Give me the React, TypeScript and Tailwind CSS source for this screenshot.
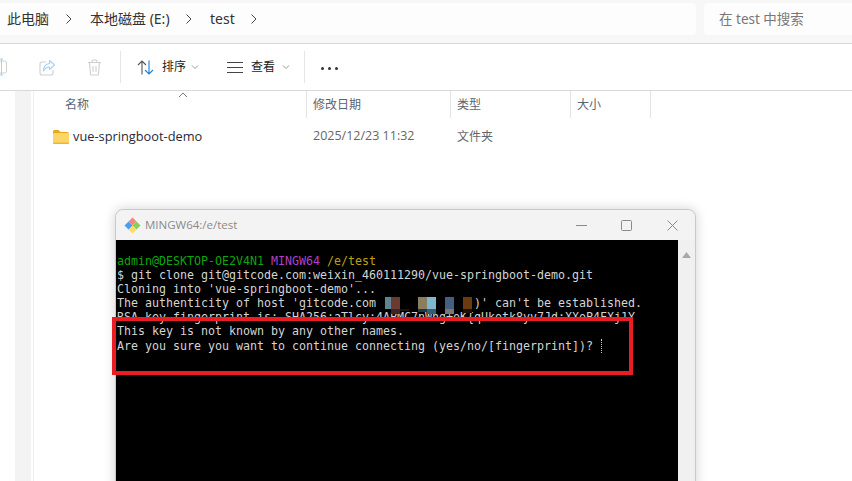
import React from "react";

const ui = { fontFamily: '"Open Sans","Noto Sans CJK SC",sans-serif' };
const cjk = { fontFamily: '"Noto Sans","Noto Sans CJK SC",sans-serif' };
const mono = { fontFamily: '"DejaVu Sans Mono","Liberation Mono",monospace' };

function Chev() {
  return (
    <svg width="8" height="12" viewBox="0 0 8 12" fill="none" stroke="#444" strokeWidth="1">
      <path d="M1.5 1.5 6 6 1.5 10.5" />
    </svg>
  );
}
function Down() {
  return (
    <svg width="8" height="6" viewBox="0 0 8 6" fill="none" stroke="#9a9a9a" strokeWidth="1">
      <path d="M1 1.5 4 4.5 7 1.5" />
    </svg>
  );
}
function Crumb({ children, w }: { children: React.ReactNode; w: string }) {
  return <span className={`text-[14px] leading-none text-[#333] whitespace-nowrap ${w}`}>{children}</span>;
}

function Mosaic() {
  const blocks = [
    { l: 269, t: 57, w: 6, h: 12, c: "#5f8492" },
    { l: 275, t: 57, w: 9, h: 12, c: "#6b3a32" },
    { l: 275, t: 69, w: 9, h: 5, c: "#3a2622" },
    { l: 284, t: 69, w: 9, h: 2, c: "#1d1410" },
    { l: 302, t: 57, w: 9, h: 12, c: "#8a7d60" },
    { l: 311, t: 57, w: 9, h: 12, c: "#7fb8cc" },
    { l: 302, t: 69, w: 9, h: 3, c: "#1c3a40" },
    { l: 311, t: 69, w: 9, h: 5, c: "#33606c" },
    { l: 329, t: 57, w: 9, h: 12, c: "#45607f" },
    { l: 329, t: 69, w: 9, h: 5, c: "#787878" },
    { l: 347, t: 57, w: 9, h: 12, c: "#6b3a10" },
    { l: 347, t: 69, w: 9, h: 4, c: "#20100a" },
  ];
  return (
    <>
      {blocks.map((b, i) => (
        <div key={i} className="absolute" style={{ left: b.l, top: b.t, width: b.w, height: b.h, background: b.c }} />
      ))}
    </>
  );
}

export default function App() {
  return (
    <div className="relative w-[852px] h-[481px] overflow-hidden bg-white flex flex-col" style={ui}>
      {/* address bar */}
      <div className="h-[44px] shrink-0 bg-[#f7f7f7] border-b border-[#d9d9d9] pt-[3px] flex items-start">
        <div className="w-[696px] h-[32px] bg-[#fdfdfd] rounded-r-[4px] flex items-center pl-[7px]" style={cjk}>
          <Crumb w="w-[58px]">此电脑</Crumb>
          <Chev />
          <span className="w-[17px]" />
          <Crumb w="w-[95px]">本地磁盘 (E:)</Crumb>
          <Chev />
          <span className="w-[17px]" />
          <Crumb w="w-[40px]">test</Crumb>
          <Chev />
        </div>
        <div className="ml-[8px] flex-1 h-[32px] bg-[#fdfdfd] rounded-l-[4px] flex items-center pl-[15px] text-[13.5px] text-[#777]" style={cjk}>
          在 test 中搜索
        </div>
      </div>

      {/* toolbar */}
      <div className="h-[47px] shrink-0 bg-white border-b border-[#d9d9d9] flex items-center">
        <svg className="ml-0 shrink-0" width="8" height="18" viewBox="0 0 8 18" fill="none">
          <path d="M0 3h4.5a2 2 0 0 1 2 2v8a2 2 0 0 1-2 2H0" stroke="#cfcfcf" strokeWidth="1" />
          <path d="M1.5 1v16M0 1h3M0 17h3" stroke="#a5d0f2" strokeWidth="1" />
        </svg>
        <svg className="ml-[31px] shrink-0" width="17" height="17" viewBox="0 0 17 17" fill="none">
          <path d="M7 3H3a2 2 0 0 0-2 2v9a2 2 0 0 0 2 2h9a2 2 0 0 0 2-2v-3" stroke="#cfcfcf" strokeWidth="1.1" />
          <path d="M10.5 1.5 15.5 6l-5 4.5V8C8 8 6 9 4.5 12c0-4 2-7 6-7.5Z" stroke="#a5d0f2" strokeWidth="1.1" strokeLinejoin="round" />
        </svg>
        <svg className="ml-[31px] shrink-0" width="15" height="17" viewBox="0 0 15 17" fill="none" stroke="#cfcfcf" strokeWidth="1.1">
          <path d="M1 3.5h13M5 3.5V2a1 1 0 0 1 1-1h3a1 1 0 0 1 1 1v1.5M2.5 3.5l1 11.5a1 1 0 0 0 1 1h6a1 1 0 0 0 1-1l1-11.5M6 7v6M9 7v6" />
        </svg>
        <div className="ml-[18px] w-px h-[32px] bg-[#e6e6e6] shrink-0" />
        <svg className="ml-[16px] shrink-0" width="17" height="15" viewBox="0 0 17 15" fill="none" strokeWidth="1.1">
          <path d="M5 14.5V1M1 5l4-4 4 4" stroke="#555" />
          <path d="M12 .5V14M8 10l4 4 4-4" stroke="#1a80d8" />
        </svg>
        <span className="ml-[8px] text-[12px] text-[#222] leading-none w-[29px] shrink-0" style={cjk}>排序</span>
        <Down />
        <svg className="ml-[28px] shrink-0" width="16" height="11" viewBox="0 0 16 11" stroke="#444" strokeWidth="1">
          <path d="M0 .5h16M0 5.5h16M0 10.5h16" />
        </svg>
        <span className="ml-[8px] text-[12px] text-[#222] leading-none w-[31px] shrink-0" style={cjk}>查看</span>
        <Down />
        <div className="ml-[14px] w-px h-[32px] bg-[#e6e6e6] shrink-0" />
        <div className="ml-[16px] flex gap-[4px] shrink-0 pt-[2px]">
          <span className="w-[3px] h-[3px] rounded-full bg-[#333]" />
          <span className="w-[3px] h-[3px] rounded-full bg-[#333]" />
          <span className="w-[3px] h-[3px] rounded-full bg-[#333]" />
        </div>
      </div>

      {/* file list */}
      <div className="flex-1 flex min-h-0">
        <div className="w-[15px] shrink-0" />
        <div className="w-[16px] shrink-0 bg-[#f3f3f3]" />
        <div className="w-[2px] shrink-0" />
        <div className="flex-1 border-l border-[#eeeeee] min-w-0">
          <div className="relative flex h-[27px] text-[12px] text-[#5b6570]" style={cjk}>
            <div className="w-[272px] pl-[31px] flex items-center pt-[1px]">名称</div>
            <div className="w-[144px] pl-[6px] flex items-center border-l border-[#e3e3e3]">修改日期</div>
            <div className="w-[120px] pl-[6px] flex items-center border-l border-[#e3e3e3]">类型</div>
            <div className="w-[80px] pl-[6px] flex items-center border-l border-[#e3e3e3]">大小</div>
            <div className="w-px border-l border-[#e3e3e3]" />
            <svg className="absolute left-[144px] top-[1px]" width="10" height="6" viewBox="0 0 10 6" fill="none" stroke="#777" strokeWidth="1">
              <path d="M1 5 5 1l4 4" />
            </svg>
          </div>
          <div className="flex items-center h-[37px] text-[12.8px]">
            <div className="w-[272px] flex items-center pl-[19px]">
              <svg className="shrink-0" width="16" height="14" viewBox="0 0 16 14">
                <path d="M0 1.5A1.5 1.5 0 0 1 1.5 0h4L7.5 2H14a2 2 0 0 1 2 2v1H0Z" fill="#eaa71c" />
                <rect x="0" y="3" width="16" height="11" rx="1.2" fill="#fbd667" />
                <rect x="0" y="12.5" width="16" height="1.5" rx=".7" fill="#efb432" />
              </svg>
              <span className="ml-[4px] text-[#1f2a38] whitespace-nowrap">vue-springboot-demo</span>
            </div>
            <div className="w-[144px] pl-[7px] text-[#666] text-[12.5px] whitespace-nowrap">2025/12/23 11:32</div>
            <div className="pl-[7px] text-[#666] text-[12px]" style={cjk}>文件夹</div>
          </div>
        </div>
      </div>

      {/* terminal window */}
      <div className="absolute left-[115px] top-[209px] w-[581px] h-[290px] bg-[#f0f0f0] border border-[#c9c9c9] rounded-t-[8px] flex flex-col shadow-[0_0_12px_rgba(0,0,0,0.18)]">
        <div className="h-[30px] shrink-0 bg-[#f3f3f3] rounded-t-[8px] flex items-center">
          <svg className="ml-[8px] shrink-0" width="17" height="17" viewBox="0 0 17 17">
            <path d="M8.5 .5 12.5 4.5 8.5 8.5 4.5 4.5Z" fill="#ee8a80" />
            <path d="M12.5 4.5 16.5 8.5 12.5 12.5 8.5 8.5Z" fill="#84d05a" />
            <path d="M8.5 8.5 12.5 12.5 8.5 16.5 4.5 12.5Z" fill="#f9dc6a" />
            <path d="M4.5 4.5 8.5 8.5 4.5 12.5 .5 8.5Z" fill="#4f9df2" />
          </svg>
          <span className="ml-[4px] text-[11.5px] text-[#8a8a8a] whitespace-nowrap" style={{ fontFamily: '"Open Sans",sans-serif' }}>MINGW64:/e/test</span>
          <svg className="ml-auto shrink-0" width="11" height="1" viewBox="0 0 11 1"><path d="M0 .5h11" stroke="#8a8a8a" /></svg>
          <svg className="ml-[34px] shrink-0" width="11" height="11" viewBox="0 0 11 11" fill="none"><rect x=".5" y=".5" width="10" height="10" rx="1" stroke="#8a8a8a" /></svg>
          <svg className="ml-[35px] mr-[17px] shrink-0" width="11" height="11" viewBox="0 0 11 11" fill="none"><path d="M.5.5l10 10M10.5.5l-10 10" stroke="#8a8a8a" /></svg>
        </div>
        <div className="flex flex-1 min-h-0">
          <div className="relative w-[562px] bg-black pl-[1px] pt-[13.6px] text-[11.63px] leading-[14.17px] text-[#d4d4d4] whitespace-pre overflow-hidden" style={mono}>
            <div>
              <span className="text-[#0aa80a]">admin@DESKTOP-OE2V4N1</span> <span className="text-[#b040c8]">MINGW64</span> <span className="text-[#bfa010]">/e/test</span>
            </div>
            <div>$ git clone git@gitcode.com:weixin_460111290/vue-springboot-demo.git</div>
            <div>Cloning into 'vue-springboot-demo'...</div>
            <div>The authenticity of host 'gitcode.com              )' can't be established.</div>
            <div>{"RSA key fingerprint is: SHA256:aTlcy:4APMC7nWhg+oK{qUkotk8yv7Jd:XXoP4FXj1Y"}</div>
            <div>This key is not known by any other names.</div>
            <div className="relative">
              Are you sure you want to continue connecting (yes/no/[fingerprint])?
              <span className="absolute left-[484px] top-0 h-[14px] border-l border-dotted border-[#cccccc]" />
            </div>
            <Mosaic />
          </div>
          <div className="flex-1 flex justify-center pt-[12px]">
            <svg width="9" height="6" viewBox="0 0 9 6"><path d="M4.5 0 9 6H0Z" fill="#a8a8a8" /></svg>
          </div>
        </div>
      </div>

      {/* red annotation */}
      <div className="absolute left-[112px] top-[317px] w-[521px] h-[58px] border-[4px] border-[#ea1c24]" />
    </div>
  );
}
